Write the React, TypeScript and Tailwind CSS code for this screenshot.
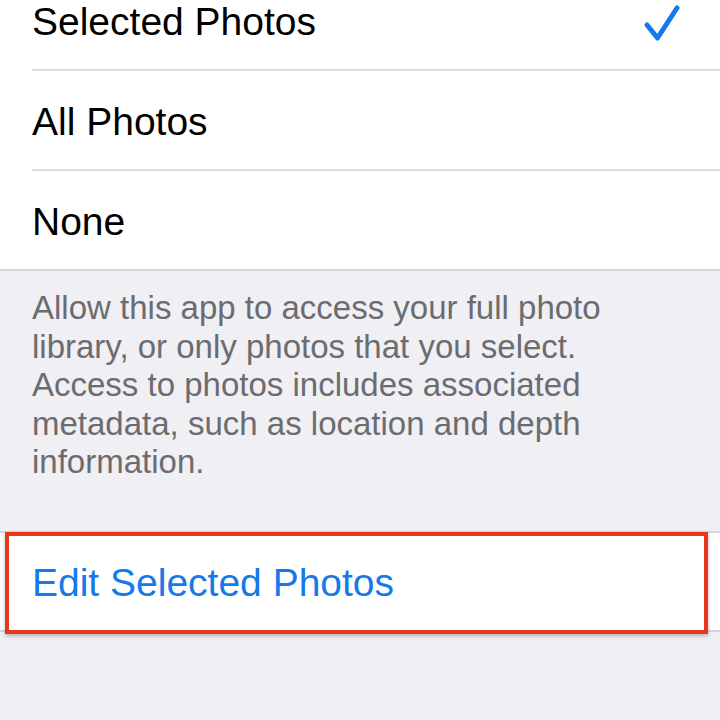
const options = [
  { label: "Selected Photos", checked: true },
  { label: "All Photos", checked: false },
  { label: "None", checked: false },
];

const CheckMark = () => (
  <svg width="40" height="40" viewBox="0 0 40 40" fill="none">
    <path d="M5 22 L15.5 35 L35 5" stroke="#1479ea" strokeWidth="5" strokeLinecap="round" strokeLinejoin="round" />
  </svg>
);

const App = () => {
  return (
    <div className="w-[720px] h-[720px] overflow-hidden bg-[#efeff4] font-['Liberation_Sans',Arial,sans-serif]">
      {/* Options list */}
      <div className="-mt-[29px] bg-white border-b-2 border-[#d6d6da]">
        {options.map((opt, i) => (
          <div key={opt.label} className="pl-8">
            <div
              className={
                "flex items-center justify-between pr-[38px] pt-[5px] " +
                (i < options.length - 1 ? "h-[100px] border-b-2 border-[#dcdcdf]" : "h-[98px]")
              }
            >
              <span className="text-[39px] text-black">{opt.label}</span>
              {opt.checked && <CheckMark />}
            </div>
          </div>
        ))}
      </div>

      {/* Footer note */}
      <p className="pl-8 pt-[18px] pb-[49px] text-[33px] leading-[38.5px] text-[#6c6c70]">
        Allow this app to access your full photo
        <br />
        library, or only photos that you select.
        <br />
        Access to photos includes associated
        <br />
        metadata, such as location and depth
        <br />
        information.
      </p>

      {/* Edit row */}
      <div className="relative bg-white border-y-2 border-[#d6d6da]">
        <div className="h-[97px] flex items-center pl-8 pt-[4px]">
          <span className="text-[39px] text-[#1479ea]">Edit Selected Photos</span>
        </div>
        <div className="absolute left-[5px] top-[-1px] w-[703px] h-[102px] border-[4px] border-[#e8361c] shadow-[0_2px_4px_rgba(0,0,0,0.25)]" />
      </div>
    </div>
  );
};

export default App;
